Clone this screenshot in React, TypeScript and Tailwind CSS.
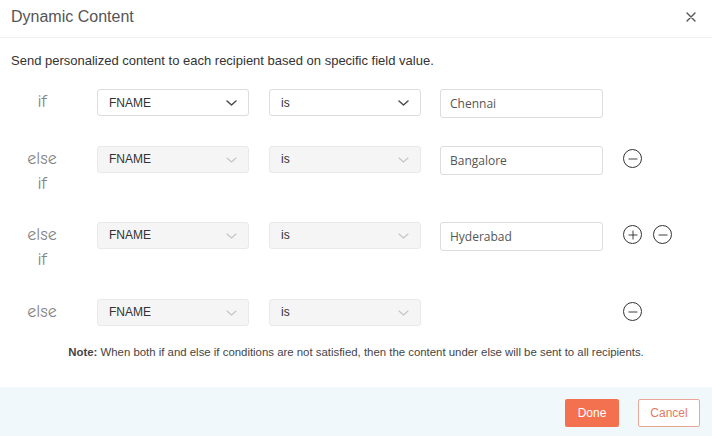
import {Plus, Minus} from "lucide-react";

type Row = {
    label: string[];
    value?: string;
    active?: boolean;
    plus?: boolean;
    minus?: boolean;
    height: string;
};

const rows: Row[] = [
    {label: ["if"], value: "Chennai", active: true, height: "h-[57px]"},
    {label: ["else", "if"], value: "Bangalore", minus: true, height: "h-[76px]"},
    {label: ["else", "if"], value: "Hyderabad", plus: true, minus: true, height: "h-[77px]"},
    {label: ["else"], minus: true, height: "h-[27px]"},
];

function Chevron({active}: { active?: boolean }) {
    return (
        <svg width="11" height="6" viewBox="0 0 11 6" fill="none">
            <path d="M1 1l4.5 4 4.5-4" stroke={active ? "#4a4a4a" : "#c4c4c4"} strokeWidth={active ? 1.5 : 1.1}
                  strokeLinecap="round" strokeLinejoin="round"/>
        </svg>
    );
}

function FakeSelect({text, active}: { text: string; active?: boolean }) {
    return (
        <div
            className={`w-[152px] h-[27px] rounded-[3px] border flex items-center justify-between pl-[11px] pr-[11px] ${
                active ? "bg-white border-[#dcdcdc] pt-[1px]" : "bg-[#f5f5f5] border-[#e9e9e9] pb-[2px]"
            }`}
        >
            <span className="text-[12px] text-[#333]">{text}</span>
            <span className={active ? "" : "pt-[3px]"}>
                <Chevron active={active}/>
            </span>
        </div>
    );
}

function CircleBtn({kind}: { kind: "plus" | "minus" }) {
    const Icon = kind === "plus" ? Plus : Minus;
    return (
        <button className="w-[19px] h-[19px] rounded-full border-[1.3px] border-[#333] flex items-center justify-center">
            <Icon size={14} strokeWidth={1.6} color="#333"/>
        </button>
    );
}

export default function App() {
    return (
        <div className="w-[712px] h-[436px] bg-white flex flex-col font-['Liberation_Sans',Arial,sans-serif]">
            <div className="h-[38px] shrink-0 flex items-center justify-between pl-[11px] pr-[16px] border-b border-[#efefef]">
                <h1 className="text-[16px] text-[#555] pb-[4px]">Dynamic Content</h1>
                <svg width="10" height="10" viewBox="0 0 10 10" className="mb-[4px]">
                    <path d="M1 1l8 8M9 1l-8 8" stroke="#555" strokeWidth="1.4" strokeLinecap="round"/>
                </svg>
            </div>

            <div className="flex-1 flex flex-col">
                <p className="mt-[15px] pl-[11px] text-[13px] leading-[16px] text-[#333]">
                    Send personalized content to each recipient based on specific field value.
                </p>

                <div className="mt-[20px] flex flex-col">
                    {rows.map((row, i) => (
                        <div key={i} className={`flex items-start ${row.height}`}>
                            <div
                                className="w-[84px] text-center text-[18px] leading-[25px] text-[#858585] font-['Comic_Sans_MS','Comic_Neue','DejaVu_Sans',cursive]">
                                {row.label.map((l) => (
                                    <div key={l}>{l}</div>
                                ))}
                            </div>
                            <div className="ml-[13px]">
                                <FakeSelect text="FNAME" active={row.active}/>
                            </div>
                            <div className="ml-[20px]">
                                <FakeSelect text="is" active={row.active}/>
                            </div>
                            <div className="ml-[19px] w-[163px]">
                                {row.value && (
                                    <div
                                        className="h-[29px] rounded-[3px] border border-[#dcdcdc] bg-white flex items-center pl-[9px] text-[12px] text-[#555] font-['Open_Sans',sans-serif]">
                                        {row.value}
                                    </div>
                                )}
                            </div>
                            <div className="ml-[20px] mt-[3px] flex gap-[11px]">
                                {row.plus && <CircleBtn kind="plus"/>}
                                {row.minus && <CircleBtn kind="minus"/>}
                            </div>
                        </div>
                    ))}
                </div>

                <p className="mt-[19px] text-center text-[11.4px] leading-[14px] text-[#444]">
                    <span className="font-bold">Note:</span> When both if and else if conditions are not satisfied,
                    then the content under else will be sent to all recipients.
                </p>
            </div>

            <div className="h-[49px] shrink-0 bg-[#f0f8fc] flex items-center justify-end gap-[19px] pr-[12px] pt-[3px]">
                <button className="w-[54px] h-[28px] rounded-[2px] bg-[#f4714f] text-white text-[12px]">
                    Done
                </button>
                <button
                    className="w-[62px] h-[28px] rounded-[2px] bg-white border border-[#e8a797] text-[#e27b62] text-[12px]">
                    Cancel
                </button>
            </div>
        </div>
    );
}
